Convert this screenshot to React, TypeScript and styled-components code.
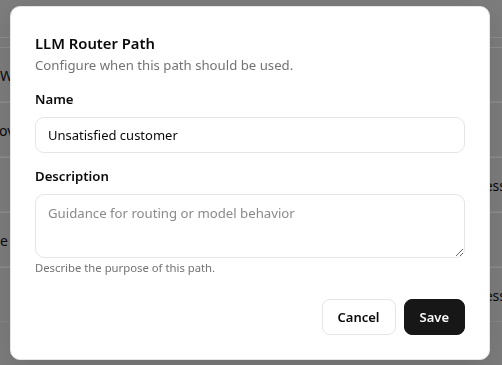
import React, { useState } from 'react';
import styled, { createGlobalStyle } from 'styled-components';

const GlobalStyle = createGlobalStyle`
    * { box-sizing: border-box; }
    html, body {
        margin: 0;
        padding: 0;
        width: 502px;
        height: 365px;
        overflow: hidden;
        font-family: "Noto Sans", "Open Sans", sans-serif;
        color: #0a0a0a;
    }
`;

// rows of the page that sits behind the dialog; only their edges show
const bgRows = [
    { left: "Wizard handoff", leftShift: 0, right: "" },
    { left: "overview", leftShift: -1, right: "" },
    { left: "", leftShift: 0, right: "Success" },
    { left: "e", leftShift: 0, right: "" },
    { left: "", leftShift: 0, right: "Success" },
];

function BackgroundTable() {
    return (
        <Page>
            <PageHeader />
            {bgRows.map((row, i) => (
                <BgRow key={i}>
                    <BgCell style={{ marginLeft: row.leftShift }}>{row.left}</BgCell>
                    <BgTail>{row.right}</BgTail>
                </BgRow>
            ))}
        </Page>
    );
}

export default function App() {
    const [name, setName] = useState("Unsatisfied customer");
    const [description, setDescription] = useState("");

    return (
        <>
            <GlobalStyle />
            <BackgroundTable />
            <Overlay>
                <Dialog role="dialog" aria-labelledby="dialog-title">
                    <Header>
                        <Title id="dialog-title">LLM Router Path</Title>
                        <Subtitle>Configure when this path should be used.</Subtitle>
                    </Header>
                    <Field>
                        <Label htmlFor="path-name">Name</Label>
                        <TextInput id="path-name" value={name} onChange={(e) => setName(e.target.value)} />
                    </Field>
                    <Field>
                        <Label htmlFor="path-desc">Description</Label>
                        <TextArea
                            id="path-desc"
                            placeholder="Guidance for routing or model behavior"
                            value={description}
                            onChange={(e) => setDescription(e.target.value)}
                        />
                        <Hint>Describe the purpose of this path.</Hint>
                    </Field>
                    <Footer>
                        <Button>Cancel</Button>
                        <Button $primary>Save</Button>
                    </Footer>
                </Dialog>
            </Overlay>
        </>
    );
}

const Page = styled.div`
    width: 502px;
    height: 365px;
    overflow: hidden;
    background: #e2e2e2;
    display: flex;
    flex-direction: column;
    padding-top: 37px;
`;

const PageHeader = styled.div`
    height: 10px;
    border-top: 1px solid #ffffff;
`;

const BgRow = styled.div`
    flex: none;
    height: 55px;
    display: flex;
    align-items: center;
    justify-content: space-between;
    border-top: 1px solid #ffffff;
    box-shadow: inset 0 -9px 0 -8px #f4f4f4;
    font-size: 14px;
    color: #111;
    white-space: nowrap;
`;

const BgCell = styled.span``;

const BgTail = styled.span`
    margin-right: -4px;
`;

const Overlay = styled.div`
    position: fixed;
    inset: 0;
    padding-right: 2px;
    background: rgba(0, 0, 0, 0.45);
    display: flex;
    align-items: center;
    justify-content: center;
`;

const Dialog = styled.div`
    width: 480px;
    background: #ffffff;
    border: 1px solid #e5e5e5;
    border-radius: 10px;
    padding: 24px;
    display: flex;
    flex-direction: column;
    box-shadow: 0 10px 30px rgba(0, 0, 0, 0.12);
`;

const Header = styled.div`
    display: flex;
    flex-direction: column;
    margin-bottom: 14px;
`;

const Title = styled.h2`
    margin: 0;
    font-size: 14.8px;
    line-height: 24px;
    font-weight: 600;
    color: #0a0a0a;
`;

const Subtitle = styled.p`
    margin: 0;
    font-size: 13.2px;
    line-height: 20px;
    color: #737373;
`;

const Field = styled.div`
    display: flex;
    flex-direction: column;
    gap: 8px;

    & + & {
        margin-top: 13px;
    }
`;

const Label = styled.label`
    font-size: 13.2px;
    line-height: 20px;
    font-weight: 600;
    color: #0a0a0a;
`;

const TextInput = styled.input`
    height: 36px;
    width: 100%;
    border: 1px solid #e5e5e5;
    border-radius: 9px;
    padding: 0 12px;
    font-family: inherit;
    font-size: 13px;
    color: #0a0a0a;
    background: #fff;
    outline: none;
`;

const TextArea = styled.textarea`
    height: 64px;
    width: 100%;
    border: 1px solid #e5e5e5;
    border-radius: 9px;
    padding: 8px 12px;
    font-family: inherit;
    font-size: 13.2px;
    line-height: 20px;
    color: #0a0a0a;
    background: #fff;
    outline: none;
    resize: vertical;

    &::placeholder {
        color: #8a8a8a;
    }
`;

const Hint = styled.p`
    margin: -6px 0 0;
    font-size: 11.3px;
    line-height: 16px;
    color: #737373;
`;

const Footer = styled.div`
    display: flex;
    justify-content: flex-end;
    gap: 8px;
    margin-top: 23px;
`;

const Button = styled.button<{ $primary?: boolean }>`
    height: 36px;
    padding: 0 15px;
    border-radius: 8px;
    font-family: inherit;
    font-size: 13px;
    font-weight: 600;
    cursor: pointer;
    border: 1px solid ${(p) => (p.$primary ? "#171717" : "#e5e5e5")};
    background: ${(p) => (p.$primary ? "#171717" : "#ffffff")};
    color: ${(p) => (p.$primary ? "#fafafa" : "#0a0a0a")};
`;
